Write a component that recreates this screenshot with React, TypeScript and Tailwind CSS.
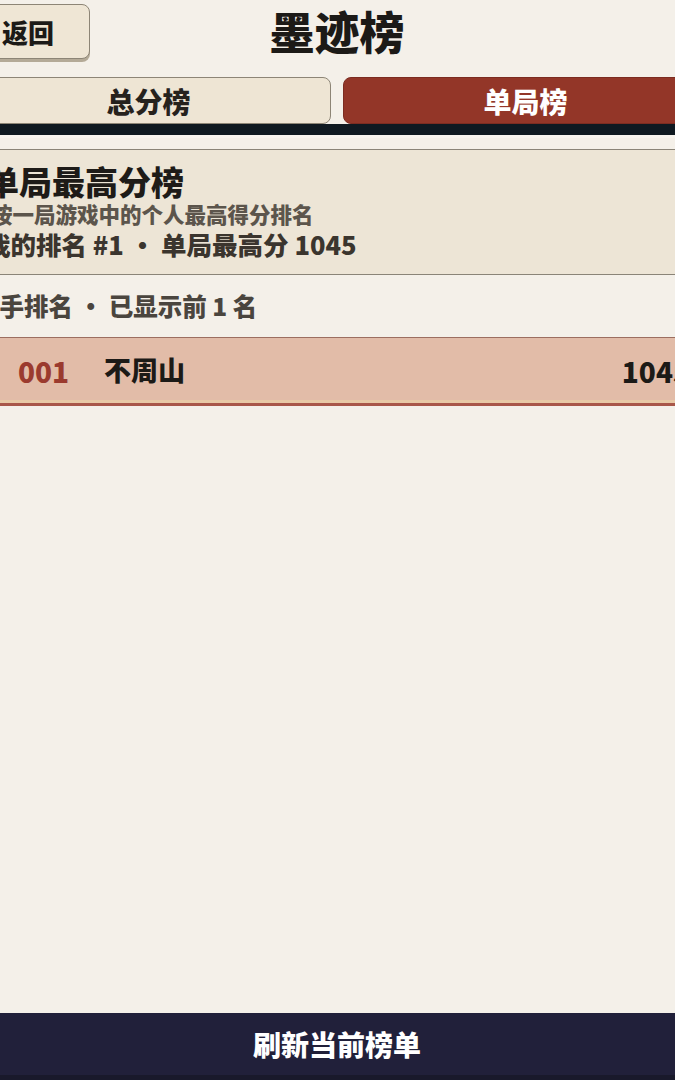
import React from "react";

const FONT = { fontFamily: '"Noto Sans CJK SC", "Noto Sans", sans-serif' };

function Tab({ label, active }: { label: string; active?: boolean }) {
  return (
    <div
      className={
        active
          ? "flex-1 h-[47px] rounded-lg bg-[#933628] border border-[#7c2c21] flex items-center justify-center text-[28px] font-black text-white"
          : "flex-1 h-[47px] rounded-lg bg-[#eee5d4] border border-[#8d8576] flex items-center justify-center text-[28px] font-black text-[#26221d]"
      }
    >
      {label}
    </div>
  );
}

export default function App() {
  return (
    <div className="w-[675px] h-[1080px] overflow-hidden bg-[#f4f0e9]" style={FONT}>
      <div className="w-[742px] h-full -ml-[34px] flex flex-col">
        {/* header */}
        <div className="grid grid-cols-[124px_1fr_124px] items-center pt-[4px]">
          <button className="h-[55px] rounded-lg border-[1.5px] border-[#8d8576] bg-[#efe6d5] shadow-[0_3px_0_#b4aa97] text-[26px] font-black text-[#1c1a17] leading-none">
            返回
          </button>
          <h1 className="text-center text-[45px] font-black text-[#1c1a17] leading-none -mt-[2px]">墨迹榜</h1>
          <div />
        </div>

        {/* tabs */}
        <div className="flex gap-3 mt-[18px]">
          <Tab label="总分榜" />
          <Tab label="单局榜" active />
        </div>
        <div className="h-[11px] bg-[#0f1921]" />
        <div className="h-[3px] bg-[#f7f4ef]" />

        {/* info card */}
        <div className="mt-[11px] h-[126px] border-y border-[#8a8478] bg-[#ede5d6] pl-[20px] pt-[12px] flex flex-col">
          <div className="text-[33px] font-black text-[#1e1b18] leading-[38px]">单局最高分榜</div>
          <div className="text-[21.5px] font-black text-[#5c554c] leading-[28px] pl-[5px]">按一局游戏中的个人最高得分排名</div>
          <div className="text-[25.5px] font-black text-[#3b352e] leading-[32px] whitespace-pre -ml-[1px]">
            我的排名 #1 · 单局最高分 1045
          </div>
        </div>

        {/* list header */}
        <div className="h-[62px] flex items-center pl-[9px] text-[24.5px] font-black text-[#4a453e] whitespace-pre">
          选手排名 · 已显示前 1 名
        </div>

        {/* row */}
        <div className="h-[69px] bg-[#e2bca8] border-t border-[#9c6e60] border-b-[3px] border-b-[#a8574a] shadow-[inset_0_-3px_0_#e8c9a6] flex items-center pl-[52px] pr-[18px]">
          <span className="w-[86px] text-[28px] font-black text-[#9b3a2e]">001</span>
          <span className="flex-1 text-[27px] font-black text-[#1c1a17]">不周山</span>
          <span className="text-[28px] font-black text-[#1c1a17]">1045</span>
        </div>

        <div className="flex-1" />

        {/* refresh */}
        <button className="h-[67px] bg-[#21203a] border-b-[5px] border-[#19192b] text-[28px] font-black text-white leading-none">
          刷新当前榜单
        </button>
      </div>
    </div>
  );
}
